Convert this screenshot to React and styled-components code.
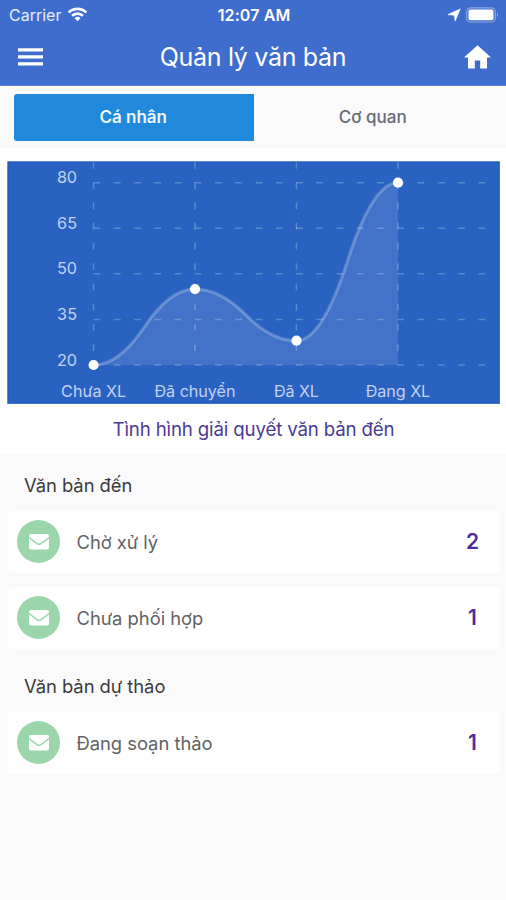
import React from "react";
import styled, { createGlobalStyle } from "styled-components";

const GlobalStyle = createGlobalStyle`
  * { box-sizing: border-box; }
  body { margin: 0; background: #fafafa; font-family: Inter, Roboto, sans-serif; }
`;

const Screen = styled.main`
  width: 506px;
  height: 900px;
  display: flex;
  flex-direction: column;
  background: #fafafa;
  overflow: hidden;
`;

const Header = styled.header`
  height: 86px;
  flex: none;
  background: #3f6dcd;
  color: #fff;
  border-bottom: 1px solid #5b80d6;
`;

const StatusBar = styled.div`
  height: 29px;
  display: grid;
  grid-template-columns: 1fr auto 1fr;
  align-items: center;
  padding: 0 7px 0 9px;
`;

const Carrier = styled.div`
  display: flex;
  align-items: center;
  gap: 6px;
  font-size: 16px;
  letter-spacing: 0;
  color: #e6edfb;
`;

const Clock = styled.div`
  font-size: 16px;
  font-weight: 600;
  letter-spacing: 0.12px;
`;

const StatusIcons = styled.div`
  display: flex;
  justify-content: flex-end;
  align-items: center;
  gap: 5px;
`;

const NavBar = styled.div`
  height: 55px;
  display: grid;
  grid-template-columns: 60px 1fr 60px;
  align-items: center;
`;

const NavButton = styled.button`
  display: flex;
  align-items: center;
  justify-content: ${(p) => (p.$end ? "flex-end" : "flex-start")};
  padding: ${(p) => (p.$end ? "0 15px 0 0" : "0 0 0 18px")};
  border: 0;
  background: none;
  color: #fff;
`;

const Title = styled.h1`
  margin: 0;
  padding-top: 1px;
  text-align: center;
  font-size: 25px;
  font-weight: 400;
  line-height: 30px;
  letter-spacing: -0.3px;
  white-space: nowrap;
`;

const TabBar = styled.nav`
  height: 62px;
  flex: none;
  display: flex;
  padding: 8px 13px 0 14px;
`;

const Tab = styled.button`
  flex: 1;
  height: 47px;
  padding: 0 1px 2px 0;
  border: 0;
  border-radius: 3px 0 0 3px;
  background: ${(p) => (p.$active ? "#2089dc" : "transparent")};
  color: ${(p) => (p.$active ? "#f0f7fd" : "#656b76")};
  font: 500 17px Inter, sans-serif;
  font-weight: ${(p) => (p.$active ? 600 : 500)};
`;

const ChartPanel = styled.section`
  height: 306px;
  flex: none;
  padding: 13px 0 0 7px;
  background: #fff;
`;

const ChartSvg = styled.svg`
  display: block;
`;

const AxisLabel = styled.text`
  font: 400 16.2px Inter, sans-serif;
  fill: #c3d2f0;
`;

const Caption = styled.p`
  margin: 12px 0 0 -6px;
  text-align: center;
  font-size: 18.7px;
  line-height: 27px;
  letter-spacing: -0.16px;
  color: #4b3a94;
  white-space: nowrap;
`;

const Heading = styled.h2`
  margin: 0;
  padding-left: 24px;
  height: 57px;
  line-height: 63px;
  font-size: 18.4px;
  font-weight: 400;
  letter-spacing: -0.04px;
  color: #3c3c3e;
`;

const List = styled.div`
  display: flex;
  flex-direction: column;
  gap: 14px;
  padding: 0 6px 0 8px;
  margin-bottom: ${(p) => p.$after || 0}px;
`;

const Row = styled.div`
  height: 62px;
  display: flex;
  align-items: center;
  padding: 0 21px 1px 9px;
  background: #fff;
  border-radius: 4px;
`;

const Badge = styled.span`
  width: 43px;
  height: 43px;
  margin-right: 16.5px;
  border-radius: 50%;
  background: #9ad6aa;
  display: flex;
  align-items: center;
  justify-content: center;
`;

const RowLabel = styled.span`
  flex: 1;
  font-size: 18.4px;
  letter-spacing: -0.03px;
  color: #626264;
`;

const Count = styled.strong`
  min-width: 13px;
  text-align: center;
  font-size: 21px;
  font-weight: 600;
  color: #4c2d9c;
`;

const WifiIcon = () => (
  <svg width="21" height="15" viewBox="0 0 22 16" fill="none" stroke="#fff">
    <path d="M1.6 5.8a13.6 13.6 0 0 1 18.8 0" strokeWidth="2.9" />
    <path d="M5.2 9.4a8.4 8.4 0 0 1 11.6 0" strokeWidth="2.8" />
    <path d="M11 15.3 7.8 12a4.6 4.6 0 0 1 6.4 0Z" fill="#fff" stroke="none" />
  </svg>
);

const LocationIcon = () => (
  <svg width="14" height="14" viewBox="0 0 14 14" fill="#fff" stroke="#fff" strokeWidth=".6" strokeLinejoin="round">
    <path d="M13.2.9 8.2 13 7.1 7.2.9 6.6Z" />
  </svg>
);

const BatteryIcon = () => (
  <svg width="33" height="16" viewBox="0 0 33 16" fill="none">
    <rect x=".7" y=".8" width="28.6" height="14.2" rx="4" stroke="#8ba6e2" strokeWidth="1.2" />
    <rect x="2.5" y="2.6" width="25" height="10.6" rx="2" fill="#fff" />
    <path d="M31 5.5q2 2.4 0 4.8Z" fill="#9bb3e6" />
  </svg>
);

const MenuIcon = () => (
  <svg width="25" height="18" viewBox="0 0 25 18" fill="#fff">
    <path d="M0 .2h25v3.3H0zM0 7.2h25v3.3H0zM0 14.2h25v3.3H0z" />
  </svg>
);

const HomeIcon = () => (
  <svg width="27" height="24" viewBox="0 0 27 24" fill="#fff">
    <path d="M13.5.2 27 12.5h-4V23.5h-6.8v-8h-5.4v8H4v-11H0Z" />
  </svg>
);

const MailIcon = () => (
  <svg width="20" height="16" viewBox="0 0 20 16">
    <rect x="0" y="0" width="20" height="15.5" rx="2" fill="#fff" />
    <path d="M0 3.6 8 9.6q2 1.4 4 0l8-6" fill="none" stroke="#9ad6aa" strokeWidth="1.4" />
  </svg>
);

const points = [
  { x: 86.6, value: 20, label: "Chưa XL", width: 65 },
  { x: 188, value: 45, label: "Đã chuyển", width: 81 },
  { x: 289.5, value: 28, label: "Đã XL", width: 45 },
  { x: 391, value: 80, label: "Đang XL", width: 64.5 },
];
const ticks = [80, 65, 50, 35, 20];
const yOf = (v) => 204 - ((v - 20) / 60) * 182.3;

const curve = points.slice(1).reduce((d, p, i) => {
  const a = points[i];
  const ya = yOf(a.value);
  const yb = yOf(p.value);
  const mx = (a.x + p.x) / 2;
  const my = (ya + yb) / 2;
  return `${d} Q${(a.x + mx) / 2} ${ya} ${mx} ${my} Q${(p.x + mx) / 2} ${yb} ${p.x} ${yb}`;
}, `M${points[0].x} ${yOf(points[0].value)}`);

const Chart = () => (
  <ChartSvg width="493" height="243" viewBox="0 0 493 243">
    <rect x=".6" y=".6" width="492" height="242" fill="#2a62c1" />
    <path d="M.6 1h492M492.1 1v241.6M1 1v241.6M.6 242.1h492" stroke="#1c55b6" fill="none" />
    <g stroke="#fff" strokeOpacity=".24" strokeWidth="1.5" strokeDasharray="6.75 13.5">
      {ticks.map((t) => (
        <line key={t} x1="86.6" x2="492" y1={yOf(t)} y2={yOf(t)} />
      ))}
      {points.map((p) => (
        <line key={p.x} x1={p.x - 0.1} x2={p.x - 0.1} y1="1" y2="204" />
      ))}
    </g>
    <path d={`${curve} V204 H86.6Z`} fill="#fff" fillOpacity=".115" />
    <path d={curve} fill="none" stroke="#fff" strokeOpacity=".24" strokeWidth="3.2" />
    {points.map((p) => (
      <circle key={p.x} cx={p.x} cy={yOf(p.value)} r="5.1" fill="#fff" />
    ))}
    {ticks.map((t) => (
      <AxisLabel key={t} x="50" y={yOf(t) + 0.6} textLength="20">{t}</AxisLabel>
    ))}
    {points.map((p) => (
      <AxisLabel key={p.x} x={p.x - p.width / 2} y="236.3" textLength={p.width}>{p.label}</AxisLabel>
    ))}
  </ChartSvg>
);

const Item = ({ label, count }) => (
  <Row>
    <Badge><MailIcon /></Badge>
    <RowLabel>{label}</RowLabel>
    <Count>{count}</Count>
  </Row>
);

export default function App() {
  return (
    <Screen>
      <GlobalStyle />
      <Header>
        <StatusBar>
          <Carrier>Carrier <WifiIcon /></Carrier>
          <Clock>12:07 AM</Clock>
          <StatusIcons><LocationIcon /><BatteryIcon /></StatusIcons>
        </StatusBar>
        <NavBar>
          <NavButton aria-label="Menu"><MenuIcon /></NavButton>
          <Title>Quản lý văn bản</Title>
          <NavButton $end aria-label="Home"><HomeIcon /></NavButton>
        </NavBar>
      </Header>
      <TabBar>
        <Tab $active>Cá nhân</Tab>
        <Tab>Cơ quan</Tab>
      </TabBar>
      <ChartPanel>
        <Chart />
        <Caption>Tình hình giải quyết văn bản đến</Caption>
      </ChartPanel>
      <Heading>Văn bản đến</Heading>
      <List $after={6}>
        <Item label="Chờ xử lý" count={2} />
        <Item label="Chưa phối hợp" count={1} />
      </List>
      <Heading>Văn bản dự thảo</Heading>
      <List>
        <Item label="Đang soạn thảo" count={1} />
      </List>
    </Screen>
  );
}
